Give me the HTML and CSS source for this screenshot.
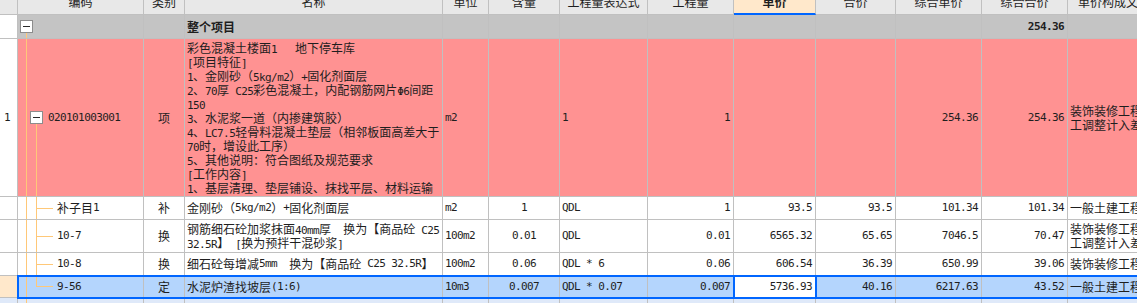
FILE: index.html
```html
<!DOCTYPE html>
<html lang="zh-CN">
<head>
    <meta charset="UTF-8">
    <title>分部分项</title>
    <link rel="stylesheet" href="styles.css">
</head>
<body>
    <div class="sheet">
        <!-- column headers -->
        <div class="row head">
            <div class="c c0"></div>
            <div class="c code"><span>编码</span></div>
            <div class="c type"><span>类别</span></div>
            <div class="c name"><span>名称</span></div>
            <div class="c unit"><span>单位</span></div>
            <div class="c qty"><span>含量</span></div>
            <div class="c expr"><span>工程量表达式</span></div>
            <div class="c amt"><span>工程量</span></div>
            <div class="c price sorted"><span>单价</span></div>
            <div class="c total"><span>合价</span></div>
            <div class="c cprice"><span>综合单价</span></div>
            <div class="c ctotal"><span>综合合价</span></div>
            <div class="c file"><span>单价构成文件</span></div>
        </div>

        <!-- whole project -->
        <div class="row r-root">
            <div class="c c0"></div>
            <div class="c code t-root"><i class="box"></i></div>
            <div class="c type"></div>
            <div class="c name"><b>整个项目</b></div>
            <div class="c unit"></div>
            <div class="c qty"></div>
            <div class="c expr"></div>
            <div class="c amt"></div>
            <div class="c price"></div>
            <div class="c total"></div>
            <div class="c cprice"></div>
            <div class="c ctotal m"><b>254.36</b></div>
            <div class="c file"></div>
        </div>

        <!-- bill item -->
        <div class="row r-item">
            <div class="c c0 m">1</div>
            <div class="c code t-item"><i class="box"></i><span class="m">020101003001</span></div>
            <div class="c type">项</div>
            <div class="c name">
                <div class="lines">
                    <div>彩色混凝土楼面<span class="m">1   </span>地下停车库</div>
                    <div><span class="m">[</span>项目特征<span class="m">]</span></div>
                    <div><span class="m">1</span>、金刚砂（<span class="m">5kg/m2</span>）<span class="m">+</span>固化剂面层</div>
                    <div><span class="m">2</span>、<span class="m">70</span>厚<span class="m"> C25</span>彩色混凝土，内配钢筋网片<span class="m">Φ6</span>间距</div>
                    <div><span class="m">150</span></div>
                    <div><span class="m">3</span>、水泥浆一道（内掺建筑胶）</div>
                    <div><span class="m">4</span>、<span class="m">LC7.5</span>轻骨料混凝土垫层（相邻板面高差大于</div>
                    <div><span class="m">70</span>时，增设此工序）</div>
                    <div><span class="m">5</span>、其他说明：符合图纸及规范要求</div>
                    <div><span class="m">[</span>工作内容<span class="m">]</span></div>
                    <div><span class="m">1</span>、基层清理、垫层铺设、抹找平层、材料运输</div>
                </div>
            </div>
            <div class="c unit m">m2</div>
            <div class="c qty"></div>
            <div class="c expr m">1</div>
            <div class="c amt m">1</div>
            <div class="c price"></div>
            <div class="c total"></div>
            <div class="c cprice m">254.36</div>
            <div class="c ctotal m">254.36</div>
            <div class="c file"><div class="lines"><div>装饰装修工程人</div><div>工调整计入差价</div></div></div>
        </div>

        <div class="row r-sub">
            <div class="c c0"></div>
            <div class="c code t-leaf">补子目<span class="m">1</span></div>
            <div class="c type">补</div>
            <div class="c name">金刚砂（<span class="m">5kg/m2</span>）<span class="m">+</span>固化剂面层</div>
            <div class="c unit m">m2</div>
            <div class="c qty m">1</div>
            <div class="c expr m">QDL</div>
            <div class="c amt m">1</div>
            <div class="c price m">93.5</div>
            <div class="c total m">93.5</div>
            <div class="c cprice m">101.34</div>
            <div class="c ctotal m">101.34</div>
            <div class="c file">一般土建工程</div>
        </div>

        <div class="row r-sub tall">
            <div class="c c0"></div>
            <div class="c code t-leaf m">10-7</div>
            <div class="c type">换</div>
            <div class="c name"><div class="lines"><div>钢筋细石砼加浆抹面<span class="m">40mm</span>厚<span class="m">  </span>换为【商品砼<span class="m"> C25</span></div><div><span class="m">32.5R</span>】<span class="m"> [</span>换为预拌干混砂浆<span class="m">]</span></div></div></div>
            <div class="c unit m">100m2</div>
            <div class="c qty m">0.01</div>
            <div class="c expr m">QDL</div>
            <div class="c amt m">0.01</div>
            <div class="c price m">6565.32</div>
            <div class="c total m">65.65</div>
            <div class="c cprice m">7046.5</div>
            <div class="c ctotal m">70.47</div>
            <div class="c file"><div class="lines"><div>装饰装修工程人</div><div>工调整计入差价</div></div></div>
        </div>

        <div class="row r-sub">
            <div class="c c0"></div>
            <div class="c code t-leaf m">10-8</div>
            <div class="c type">换</div>
            <div class="c name">细石砼每增减<span class="m">5mm  </span>换为【商品砼<span class="m"> C25 32.5R</span>】</div>
            <div class="c unit m">100m2</div>
            <div class="c qty m">0.06</div>
            <div class="c expr m">QDL * 6</div>
            <div class="c amt m">0.06</div>
            <div class="c price m">606.54</div>
            <div class="c total m">36.39</div>
            <div class="c cprice m">650.99</div>
            <div class="c ctotal m">39.06</div>
            <div class="c file">装饰装修工程人工调整计入差价</div>
        </div>

        <!-- selected row -->
        <div class="row r-sel">
            <div class="c c0"></div>
            <div class="sel-body">
                <div class="c code t-last m">9-56</div>
                <div class="c type">定</div>
                <div class="c name">水泥炉渣找坡层<span class="m">(1:6)</span></div>
                <div class="c unit m">10m3</div>
                <div class="c qty m">0.007</div>
                <div class="c expr m">QDL * 0.07</div>
                <div class="c amt m">0.007</div>
                <div class="c price m current">5736.93</div>
                <div class="c total m">40.16</div>
                <div class="c cprice m">6217.63</div>
                <div class="c ctotal m">43.52</div>
                <div class="c file">一般土建工程</div>
            </div>
        </div>

        <div class="row r-next">
            <div class="c c0"></div>
            <div class="c code t-rest"></div>
            <div class="c type"></div>
            <div class="c name"></div>
            <div class="c unit"></div>
            <div class="c qty"></div>
            <div class="c expr"></div>
            <div class="c amt"></div>
            <div class="c price"></div>
            <div class="c total"></div>
            <div class="c cprice"></div>
            <div class="c ctotal"></div>
            <div class="c file"></div>
        </div>
    </div>
</body>
</html>
```

FILE: styles.css
```css
* {
    margin: 0;
    padding: 0;
    box-sizing: border-box;
}

body {
    background-color: #ffffff;
    color: #1e1e1e;
    font: 12px/14px "Noto Sans CJK SC", sans-serif;
    overflow: hidden;
}

.sheet {
    width: 1160px;
}

.row {
    display: flex;
}

.c {
    flex: none;
    display: flex;
    align-items: center;
    padding: 0 2px;
    border-right: 1px solid #c0c0c0;
    border-bottom: 1px solid #c0c0c0;
    white-space: nowrap;
    overflow: hidden;
}

/* numbers and codes */
.m {
    font-family: "DejaVu Sans Mono", monospace;
    font-size: 11px;
    letter-spacing: -0.6px;
    white-space: pre;
}

.lines > div {
    height: 14px;
    white-space: nowrap;
}

/* column widths */
.c0 { width: 18px; padding-left: 4px; }
.code { width: 126px; }
.type { width: 41px; justify-content: center; }
.name { width: 258px; }
.unit { width: 46px; }
.qty { width: 71px; justify-content: center; }
.expr { width: 88px; }
.amt { width: 86px; justify-content: flex-end; }
.price { width: 82px; justify-content: flex-end; }
.total { width: 80px; justify-content: flex-end; }
.cprice { width: 86px; justify-content: flex-end; }
.ctotal { width: 86px; justify-content: flex-end; }
.file { width: 92px; border-right: none; }

.amt, .price, .total, .cprice, .ctotal {
    padding-right: 3px;
}

/* header */
.head {
    height: 15px;
}

.head .c {
    background-color: #e8e8e8;
    justify-content: center;
    align-items: flex-start;
    padding: 0;
}

.head .c span {
    display: block;
    margin-top: -5px;
}

.head .sorted {
    background-color: #ffe8cb;
    border-bottom: 2px solid #0066ff;
    font-weight: bold;
}

/* rows */
.r-root { height: 24px; }
.r-item { height: 158px; }
.r-sub { height: 23px; }
.r-sub.tall { height: 33px; }
.r-sel { height: 22px; }
.r-next { height: 12px; }

.r-root .c { background-color: #c4c4c4; }
.r-item .c { background-color: #ff9292; }
.r-root .c0, .r-item .c0, .r-next .c0 { background-color: #ffffff; }
.r-sel .c0 { background-color: #ffe8cb; }
.r-next .c { background-color: #dfe9f9; }

.r-root .code { padding-left: 2px; }
.r-item .code { padding-left: 12px; gap: 5px; }
.t-leaf, .t-last { padding-left: 39px; }

.box {
    flex: none;
    width: 13px;
    height: 13px;
    border: 1px solid #8c8c8c;
    background-color: #ffffff;
    display: flex;
    align-items: center;
    justify-content: center;
}

.box::before {
    content: "";
    width: 7px;
    height: 1px;
    background-color: #2a2a2a;
}

/* tree connector lines */
.t-root {
    background-image: linear-gradient(to bottom, transparent 18px, #ffc878 18px);
    background-position: 8px 0;
    background-size: 1px 100%;
    background-repeat: no-repeat;
}

.t-item {
    background-image:
        linear-gradient(#ffc878, #ffc878),
        linear-gradient(to bottom, transparent calc(50% + 7px), #ffc878 0);
    background-position: 8px 0, 18px 0;
    background-size: 1px 100%, 1px 100%;
    background-repeat: no-repeat;
}

.t-leaf {
    background-image:
        linear-gradient(#ffc878, #ffc878),
        linear-gradient(#ffc878, #ffc878),
        linear-gradient(#ffc878, #ffc878);
    background-position: 8px 0, 18px 0, 18px 50%;
    background-size: 1px 100%, 1px 100%, 17px 1px;
    background-repeat: no-repeat;
}

.t-last {
    background-image:
        linear-gradient(#ffc878, #ffc878),
        linear-gradient(to bottom, #ffc878 50%, transparent 0),
        linear-gradient(#ffc878, #ffc878);
    background-position: 8px 0, 18px 0, 18px 50%;
    background-size: 1px 100%, 1px 100%, 17px 1px;
    background-repeat: no-repeat;
}

.t-rest {
    background-image: linear-gradient(#ffc878, #ffc878);
    background-position: 8px 0;
    background-size: 1px 100%;
    background-repeat: no-repeat;
}

/* selection */
.sel-body {
    display: flex;
    position: relative;
    z-index: 1;
    outline: 2px solid #0066ff;
    outline-offset: -1px;
}

.sel-body .c {
    background-color: #b4d5fd;
}

.sel-body .current {
    background-color: #ffffff;
    position: relative;
    z-index: 2;
    outline: 2px solid #0066ff;
    outline-offset: -1px;
}
```
